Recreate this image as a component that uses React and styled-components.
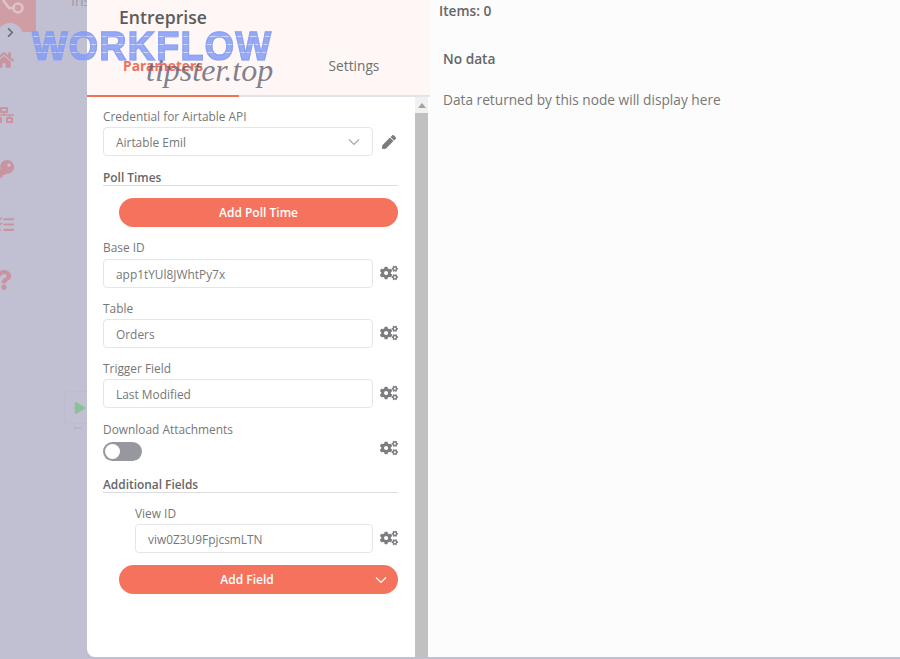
import React from 'react'
import styled, { createGlobalStyle } from 'styled-components'
import {
  FaChevronRight,
  FaCogs,
  FaHome,
  FaKey,
  FaNetworkWired,
  FaPen,
  FaPlay,
  FaQuestion,
  FaTasks,
} from 'react-icons/fa'

const GlobalStyle = createGlobalStyle`
  html, body {
    margin: 0;
    height: 100%;
    overflow: hidden;
    background: #c1c0d2;
  }
  * {
    box-sizing: border-box;
  }
`

const Page = styled.div`
  position: relative;
  display: flex;
  width: 900px;
  height: 659px;
  overflow: hidden;
  background: #c1c0d2;
  font-family: 'Open Sans', sans-serif;
  color: #666;
`

const Canvas = styled.div`
  position: relative;
  flex: 0 0 87px;
  overflow: hidden;
`

const LogoTile = styled.div`
  width: 36px;
  height: 32px;
  background: #cf9ea4;
  overflow: hidden;
`

const LogoMark = styled.svg`
  display: block;
  width: 36px;
  height: 32px;
`

const ChevronBump = styled.div`
  position: absolute;
  left: -3px;
  top: 23px;
  width: 26px;
  height: 26px;
  border-radius: 50%;
  background: #c1c0d2;
`

const Chevron = styled(FaChevronRight)`
  position: absolute;
  left: 5px;
  top: 27px;
  font-size: 11px;
  color: #6f6f7d;
`

const Nav = styled.nav`
  display: flex;
  flex-direction: column;
  gap: 35px;
  margin: 18px 0 0 -6px;
  color: #c9939f;
  font-size: 20px;
`

const TasksIcon = styled(FaTasks)`
  font-size: 17px;
  margin: 1px 0 2px 3px;
`

const CanvasHint = styled.span`
  position: absolute;
  left: 71px;
  top: -9px;
  font-size: 14px;
  color: #9a99a8;
`

const StartNode = styled.div`
  position: absolute;
  left: 64px;
  top: 391px;
  width: 30px;
  height: 33px;
  padding: 9px 0 0 9px;
  border: 1px solid #bdbccf;
  border-radius: 4px;
  color: #8cc09a;
  font-size: 12px;
`

const StartLabel = styled.span`
  position: absolute;
  left: 73px;
  top: 425px;
  font-size: 4px;
  color: #a5a4b5;
`

const Panel = styled.section`
  flex: 0 0 343px;
  display: flex;
  flex-direction: column;
  height: 657px;
  background: #fff;
  border-bottom-left-radius: 8px;
  overflow: hidden;
`

const PanelHeader = styled.header`
  flex: 0 0 97px;
  display: flex;
  flex-direction: column;
  background: #fff7f5;
  border-bottom: 2px solid #e4e3ec;
`

const Title = styled.h2`
  margin: 5px 0 0 32px;
  font-size: 17.6px;
  line-height: 24px;
  font-weight: 600;
  color: #5c5c5c;
`

const Tabs = styled.div`
  display: flex;
  margin-top: 14px;
`

const Tab = styled.div`
  flex: 0 0 ${(p) => p.$width}px;
  height: 54px;
  margin-bottom: -2px;
  padding: 13px 0 0 ${(p) => p.$inset || 0}px;
  text-align: center;
  font-size: 13.7px;
  line-height: 20px;
  font-weight: ${(p) => (p.$active ? 700 : 400)};
  color: ${(p) => (p.$active ? '#f0705a' : '#707070')};
  border-bottom: 2px solid ${(p) => (p.$active ? '#f0705a' : 'transparent')};
`

const PanelBody = styled.div`
  flex: 1;
  display: flex;
  min-height: 0;
  padding-right: 2px;
`

const Form = styled.div`
  flex: 1;
  padding: 10px 17px 0 16px;
`

const Scrollbar = styled.div`
  flex: 0 0 13px;
  display: flex;
  flex-direction: column;
  background: #f1f1f1;
`

const ScrollArrow = styled.div`
  flex: 0 0 16px;
  display: flex;
  align-items: center;
  justify-content: center;
  &::before {
    content: '';
    border-left: 4px solid transparent;
    border-right: 4px solid transparent;
    border-bottom: 5px solid #a3a3a3;
  }
`

const ScrollThumb = styled.div`
  flex: 1;
  background: #c1c1c1;
`

const Label = styled.div`
  font-size: 11.9px;
  line-height: 18px;
  color: #777;
  margin-top: ${(p) => p.$top || 0}px;
  margin-left: ${(p) => p.$indent || 0}px;
`

const Row = styled.div`
  display: flex;
  align-items: ${(p) => (p.$top === 4 ? 'flex-start' : 'center')};
  justify-content: space-between;
  margin-top: ${(p) => p.$top || 0}px;
  margin-left: ${(p) => p.$indent || 0}px;
`

const Input = styled.div`
  flex: 1;
  display: flex;
  align-items: center;
  justify-content: space-between;
  height: 29px;
  margin-right: 7px;
  padding: 0 12px;
  background: #fff;
  border: 1px solid #e6e6ea;
  border-radius: 4px;
  font-size: 11.9px;
  color: #777;
`

const RowIcon = styled.span`
  flex: 0 0 18px;
  display: flex;
  justify-content: center;
  margin-top: ${(p) => (p.$lift ? -p.$lift : 0)}px;
  font-size: ${(p) => p.$size || 18}px;
  color: #7b7b80;
`

const SectionTitle = styled.div`
  height: 17px;
  margin-top: ${(p) => p.$top || 0}px;
  border-bottom: 1px solid #dcdce2;
  font-size: 11.9px;
  line-height: 16px;
  font-weight: 600;
  color: #666;
`

const ActionButton = styled.div`
  position: relative;
  display: flex;
  align-items: center;
  justify-content: center;
  height: 29px;
  margin: ${(p) => p.$top || 0}px 0 0 16px;
  padding-right: ${(p) => (p.$menu ? 23 : 0)}px;
  background: #f5735c;
  border-radius: 15px;
  color: #fff;
  font-size: 12px;
  font-weight: 600;
`

const Caret = styled.svg`
  position: absolute;
  right: 11px;
  top: 11px;
  width: 12px;
  height: 8px;
`

const SelectCaret = styled.svg`
  width: 12px;
  height: 8px;
`

const ToggleTrack = styled.div`
  width: 39px;
  height: 19px;
  padding: 2px;
  background: #97979f;
  border-radius: 10px;
`

const ToggleKnob = styled.div`
  width: 15px;
  height: 15px;
  background: #fff;
  border-radius: 50%;
`

const Output = styled.section`
  flex: 1;
  height: 657px;
  background: #fcfcfc;
  padding: 1px 0 0 9px;
`

const ItemsCount = styled.div`
  font-size: 13.7px;
  line-height: 20px;
  font-weight: 600;
  color: #666;
`

const EmptyTitle = styled.div`
  margin: 28px 0 0 4px;
  font-size: 13.7px;
  line-height: 20px;
  font-weight: 600;
  color: #666;
`

const EmptyText = styled.div`
  margin: 21px 0 0 4px;
  font-size: 13.7px;
  line-height: 20px;
  color: #777;
`

const WatermarkTop = styled.div`
  position: absolute;
  left: 32px;
  top: 24px;
  font-family: 'Liberation Sans', sans-serif;
  font-size: 40px;
  line-height: 44px;
  font-weight: 700;
  letter-spacing: 1.4px;
  transform: scaleX(0.94);
  transform-origin: left center;
  -webkit-text-fill-color: transparent;
  -webkit-text-stroke: 1.5px rgba(132, 156, 245, 0.6);
  background: repeating-linear-gradient(
    180deg,
    rgba(132, 156, 245, 0.85) 0 4px,
    rgba(195, 205, 248, 0.8) 4px 5px,
    rgba(132, 156, 245, 0.85) 5px 8px
  );
  -webkit-background-clip: text;
  background-clip: text;
  filter: blur(0.5px);
  pointer-events: none;
`

const WatermarkBottom = styled.div`
  position: absolute;
  left: 146px;
  top: 52px;
  font-family: 'Liberation Serif', serif;
  font-style: italic;
  font-size: 32px;
  line-height: 36px;
  color: rgba(95, 95, 115, 0.8);
  pointer-events: none;
`

const ChevronDown = ({ color }) => (
  <path d="M1 1.5 L6 6.5 L11 1.5" fill="none" stroke={color} strokeWidth="1.2" />
)

const Field = ({ label, value, top, gap }) => (
  <>
    <Label $top={top}>{label}</Label>
    <Row $top={gap}>
      <Input>{value}</Input>
      <RowIcon $lift={2}>
        <FaCogs />
      </RowIcon>
    </Row>
  </>
)

export default function App() {
  return (
    <Page>
      <GlobalStyle />
      <Canvas>
        <LogoTile>
          <LogoMark viewBox="0 0 36 32">
            <g fill="none" stroke="#e0c4c8" strokeWidth="2.5">
              <circle cx="18" cy="8" r="4.5" />
              <path d="M13.5 8 H9 L3 0" />
            </g>
          </LogoMark>
        </LogoTile>
        <ChevronBump />
        <Chevron />
        <Nav>
          <FaHome />
          <FaNetworkWired />
          <FaKey />
          <TasksIcon />
          <FaQuestion />
        </Nav>
        <CanvasHint>Ins</CanvasHint>
        <StartNode>
          <FaPlay />
        </StartNode>
        <StartLabel>Start</StartLabel>
      </Canvas>

      <Panel>
        <PanelHeader>
          <Title>Entreprise</Title>
          <Tabs>
            <Tab $active $width={152}>
              Parameters
            </Tab>
            <Tab $width={191} $inset={39}>
              Settings
            </Tab>
          </Tabs>
        </PanelHeader>
        <PanelBody>
          <Form>
            <Label>Credential for Airtable API</Label>
            <Row $top={2}>
              <Input>
                Airtable Emil
                <SelectCaret viewBox="0 0 12 8">
                  <ChevronDown color="#a8a8ae" />
                </SelectCaret>
              </Input>
              <RowIcon $size={14}>
                <FaPen />
              </RowIcon>
            </Row>
            <SectionTitle $top={13}>Poll Times</SectionTitle>
            <ActionButton $top={12}>Add Poll Time</ActionButton>
            <Field label="Base ID" value="app1tYUl8JWhtPy7x" top={11} gap={3} />
            <Field label="Table" value="Orders" top={11} gap={2} />
            <Field label="Trigger Field" value="Last Modified" top={11} gap={2} />
            <Label $top={12}>Download Attachments</Label>
            <Row $top={4}>
              <ToggleTrack>
                <ToggleKnob />
              </ToggleTrack>
              <RowIcon $lift={3}>
                <FaCogs />
              </RowIcon>
            </Row>
            <SectionTitle $top={15}>Additional Fields</SectionTitle>
            <Label $top={11} $indent={32}>
              View ID
            </Label>
            <Row $top={2} $indent={32}>
              <Input>viw0Z3U9FpjcsmLTN</Input>
              <RowIcon $lift={2}>
                <FaCogs />
              </RowIcon>
            </Row>
            <ActionButton $top={12} $menu>
              Add Field
              <Caret viewBox="0 0 12 8">
                <ChevronDown color="#fff" />
              </Caret>
            </ActionButton>
          </Form>
          <Scrollbar>
            <ScrollArrow />
            <ScrollThumb />
          </Scrollbar>
        </PanelBody>
      </Panel>

      <Output>
        <ItemsCount>Items: 0</ItemsCount>
        <EmptyTitle>No data</EmptyTitle>
        <EmptyText>Data returned by this node will display here</EmptyText>
      </Output>

      <WatermarkTop>WORKFLOW</WatermarkTop>
      <WatermarkBottom>tipster.top</WatermarkBottom>
    </Page>
  )
}
